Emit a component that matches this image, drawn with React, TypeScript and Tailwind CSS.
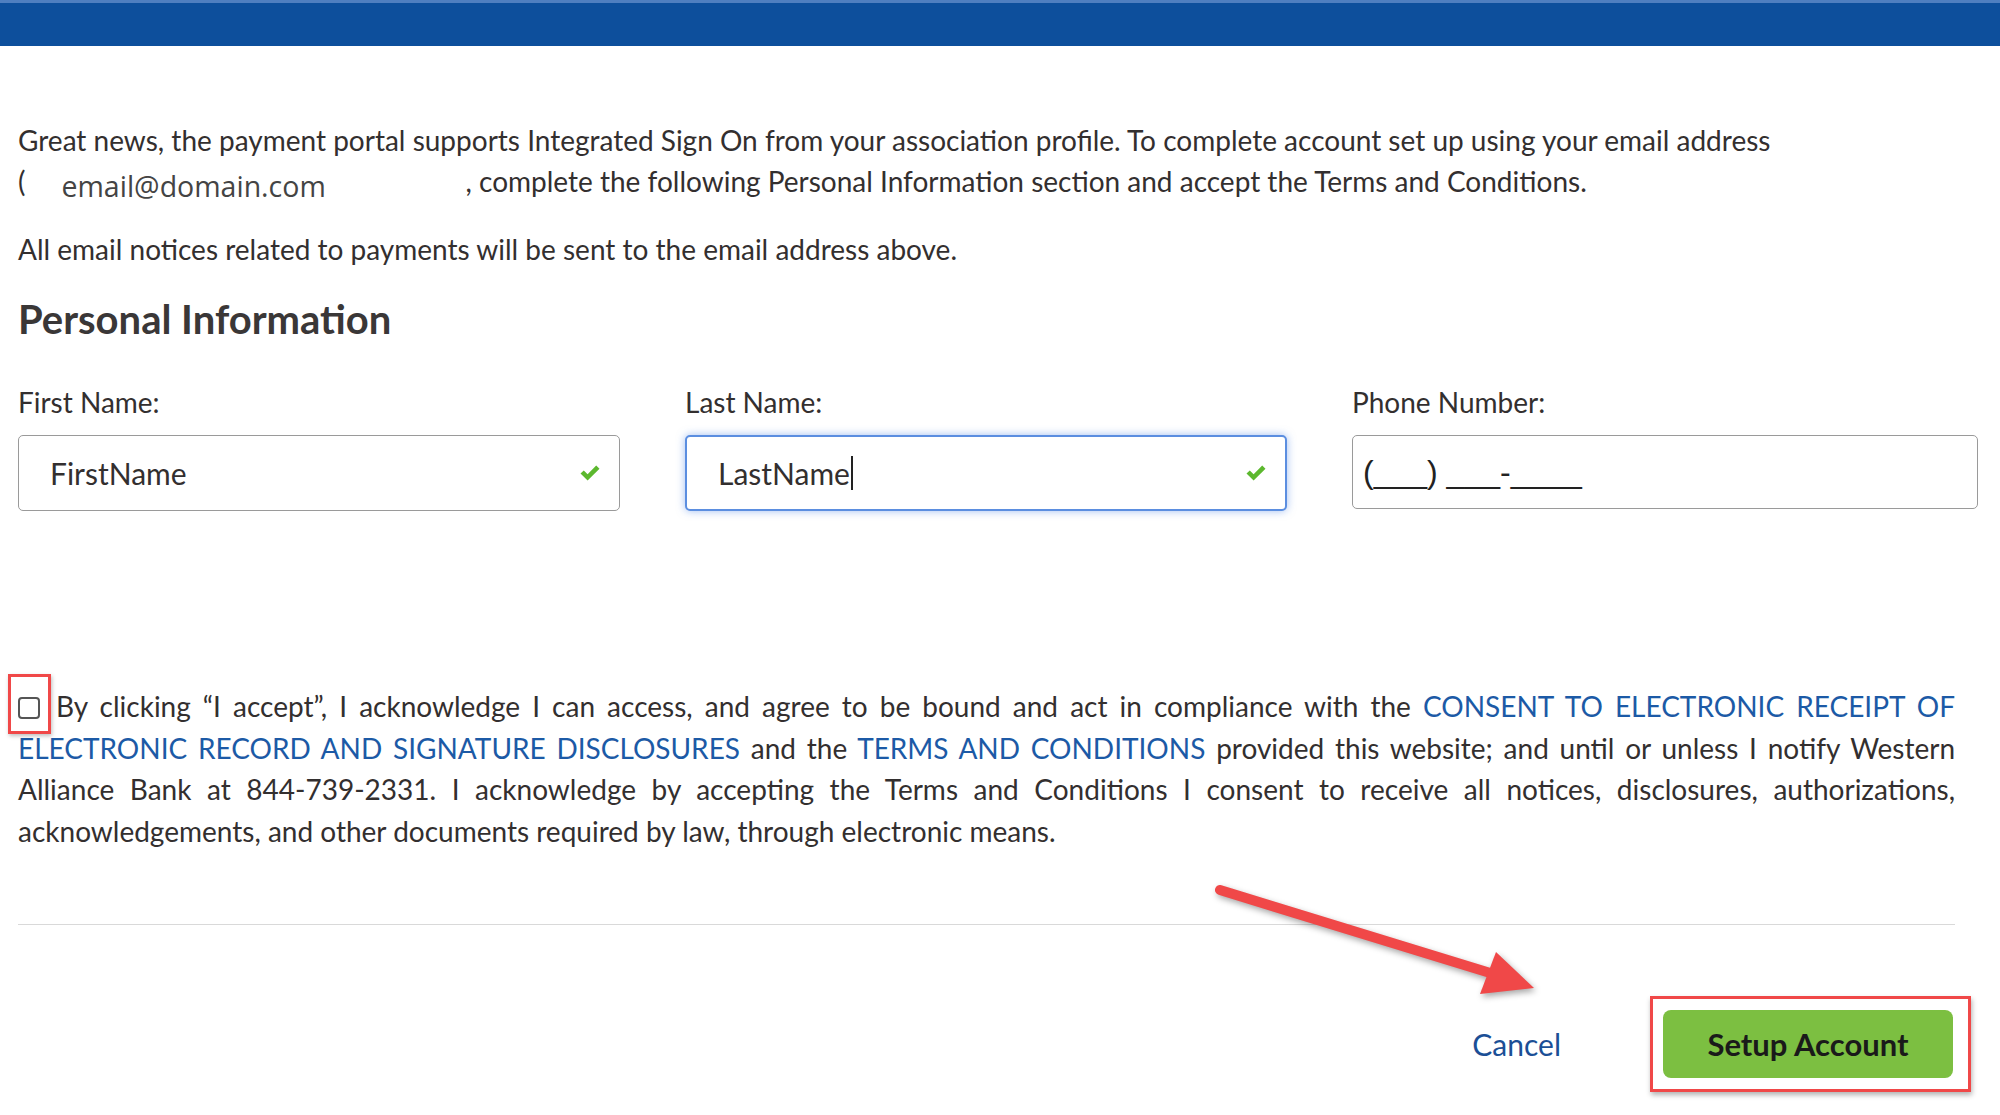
import { useState } from "react";

function Check() {
  return (
    <svg width="22" height="18" viewBox="0 0 22 18" className="shrink-0">
      <path d="M1.5 9.5 L4.8 6.4 L8.6 10.2 L17.2 1.5 L20.5 4.7 L8.6 16.5 Z" fill="#5cb82e" />
    </svg>
  );
}

function Field({
  label,
  value,
  focused,
  valid,
  width,
}: {
  label: string;
  value: string;
  focused?: boolean;
  valid?: boolean;
  width: string;
}) {
  return (
    <div className={`flex flex-col gap-[17px] ${width}`}>
      <label className="text-[28px] leading-[32px] text-[#332f2f]">{label}</label>
      <div
        className={`flex h-[76px] items-center justify-between rounded-[5px] bg-white pl-[31px] pr-[18px] ${
          focused
            ? "border-2 border-[#5b8ee0] shadow-[0_0_9px_rgba(80,135,230,0.55)]"
            : "border border-[#9a9a9a]"
        }`}
      >
        <span className="flex items-center text-[30px] text-[#332f2f]">
          {value}
          {focused && <span className="ml-[1px] inline-block h-[34px] w-[2px] bg-[#222]" />}
        </span>
        {valid && <Check />}
      </div>
    </div>
  );
}

export default function App() {
  const [accepted, setAccepted] = useState(false);

  return (
    <div className="relative min-h-[1115px] bg-white font-[Lato,sans-serif] text-[#332f2f]">
      {/* top brand bar */}
      <div className="h-[46px] border-t-[3px] border-[#4f7fc0] bg-[#0d4f9c]" />

      <main className="px-[18px] pt-[74px]">
        <p className="text-[28px] leading-[41px]">
          Great news, the payment portal supports Integrated Sign On from your association profile. To complete account set
          up using your email address
          <br />
          <span>(</span>
          <span className="ml-[36px] inline-block w-[404px] translate-y-[5px] font-['Open_Sans',sans-serif] text-[28.5px] text-[#444]">
            email@domain.com
          </span>
          , complete the following Personal Information section and accept the Terms and Conditions.
        </p>
        <p className="mt-[27px] text-[28px] leading-[41px]">
          All email notices related to payments will be sent to the email address above.
        </p>

        <h2 className="mt-[25px] text-[40px] font-bold leading-[48px] text-[#3a3737]">Personal Information</h2>

        <div className="mt-[43px] flex gap-[65px]">
          <Field label="First Name:" value="FirstName" valid width="w-[602px]" />
          <Field label="Last Name:" value="LastName" valid focused width="w-[602px]" />
          <div className="flex w-[626px] flex-col gap-[17px]">
            <label className="text-[28px] leading-[32px] text-[#332f2f]">Phone Number:</label>
            <div className="flex h-[74px] items-center rounded-[5px] border border-[#9a9a9a] pl-[10px]">
              <span className="font-['Liberation_Sans',sans-serif] text-[32px] text-[#222]">(___) ___-____</span>
            </div>
          </div>
        </div>

        {/* consent */}
        <div className="mt-[175px] w-[1937px] text-justify text-[28px] leading-[41.5px]">
          <span className="relative mr-[16px] inline-block align-[-2px]">
            <button
              type="button"
              onClick={() => setAccepted(!accepted)}
              className={`block h-[22px] w-[22px] rounded-[4px] border-2 border-[#555] ${accepted ? "bg-[#1c5aa6]" : "bg-white"}`}
              aria-label="I accept"
            />
            <span className="pointer-events-none absolute -left-[10px] -top-[23px] h-[60px] w-[43px] border-[3px] border-[#f04848] shadow-[1px_2px_4px_rgba(0,0,0,0.25)]" />
          </span>
          By clicking “I accept”, I acknowledge I can access, and agree to be bound and act in compliance with the{" "}
          <a className="text-[#1c5aa6]" href="#">
            CONSENT TO ELECTRONIC RECEIPT OF ELECTRONIC RECORD AND SIGNATURE DISCLOSURES
          </a>{" "}
          and the{" "}
          <a className="text-[#1c5aa6]" href="#">
            TERMS AND CONDITIONS
          </a>{" "}
          provided this website; and until or unless I notify Western Alliance Bank at 844-739-2331. I acknowledge by
          accepting the Terms and Conditions I consent to receive all notices, disclosures, authorizations,
          acknowledgements, and other documents required by law, through electronic means.
        </div>

        <hr className="mt-[72px] w-[1937px] border-t border-[#d9d9d9]" />

        <div className="mt-[85px] flex w-[1935px] items-center justify-end gap-[102px]">
          <a href="#" className="text-[30px] text-[#1b4f96]">
            Cancel
          </a>
          <div className="relative">
            <button
              type="button"
              className="h-[68px] w-[290px] rounded-[8px] bg-[#7cbf41] text-[31px] font-bold text-[#1a1a1a]"
            >
              Setup Account
            </button>
            <span className="pointer-events-none absolute -bottom-[14px] -left-[13px] -right-[18px] -top-[14px] border-[3px] border-[#f04848] shadow-[1px_3px_5px_rgba(0,0,0,0.3)]" />
          </div>
        </div>
      </main>

      {/* callout arrow */}
      <svg className="pointer-events-none absolute left-[1200px] top-[870px]" width="360" height="140" viewBox="0 0 360 140">
        <g style={{ filter: "drop-shadow(2px 3px 3px rgba(0,0,0,0.35))" }}>
          <line x1="20" y1="20" x2="300" y2="106" stroke="#f04848" strokeWidth="10" strokeLinecap="round" />
          <polygon points="334,118 280,124 296,82" fill="#f04848" />
        </g>
      </svg>
    </div>
  );
}
